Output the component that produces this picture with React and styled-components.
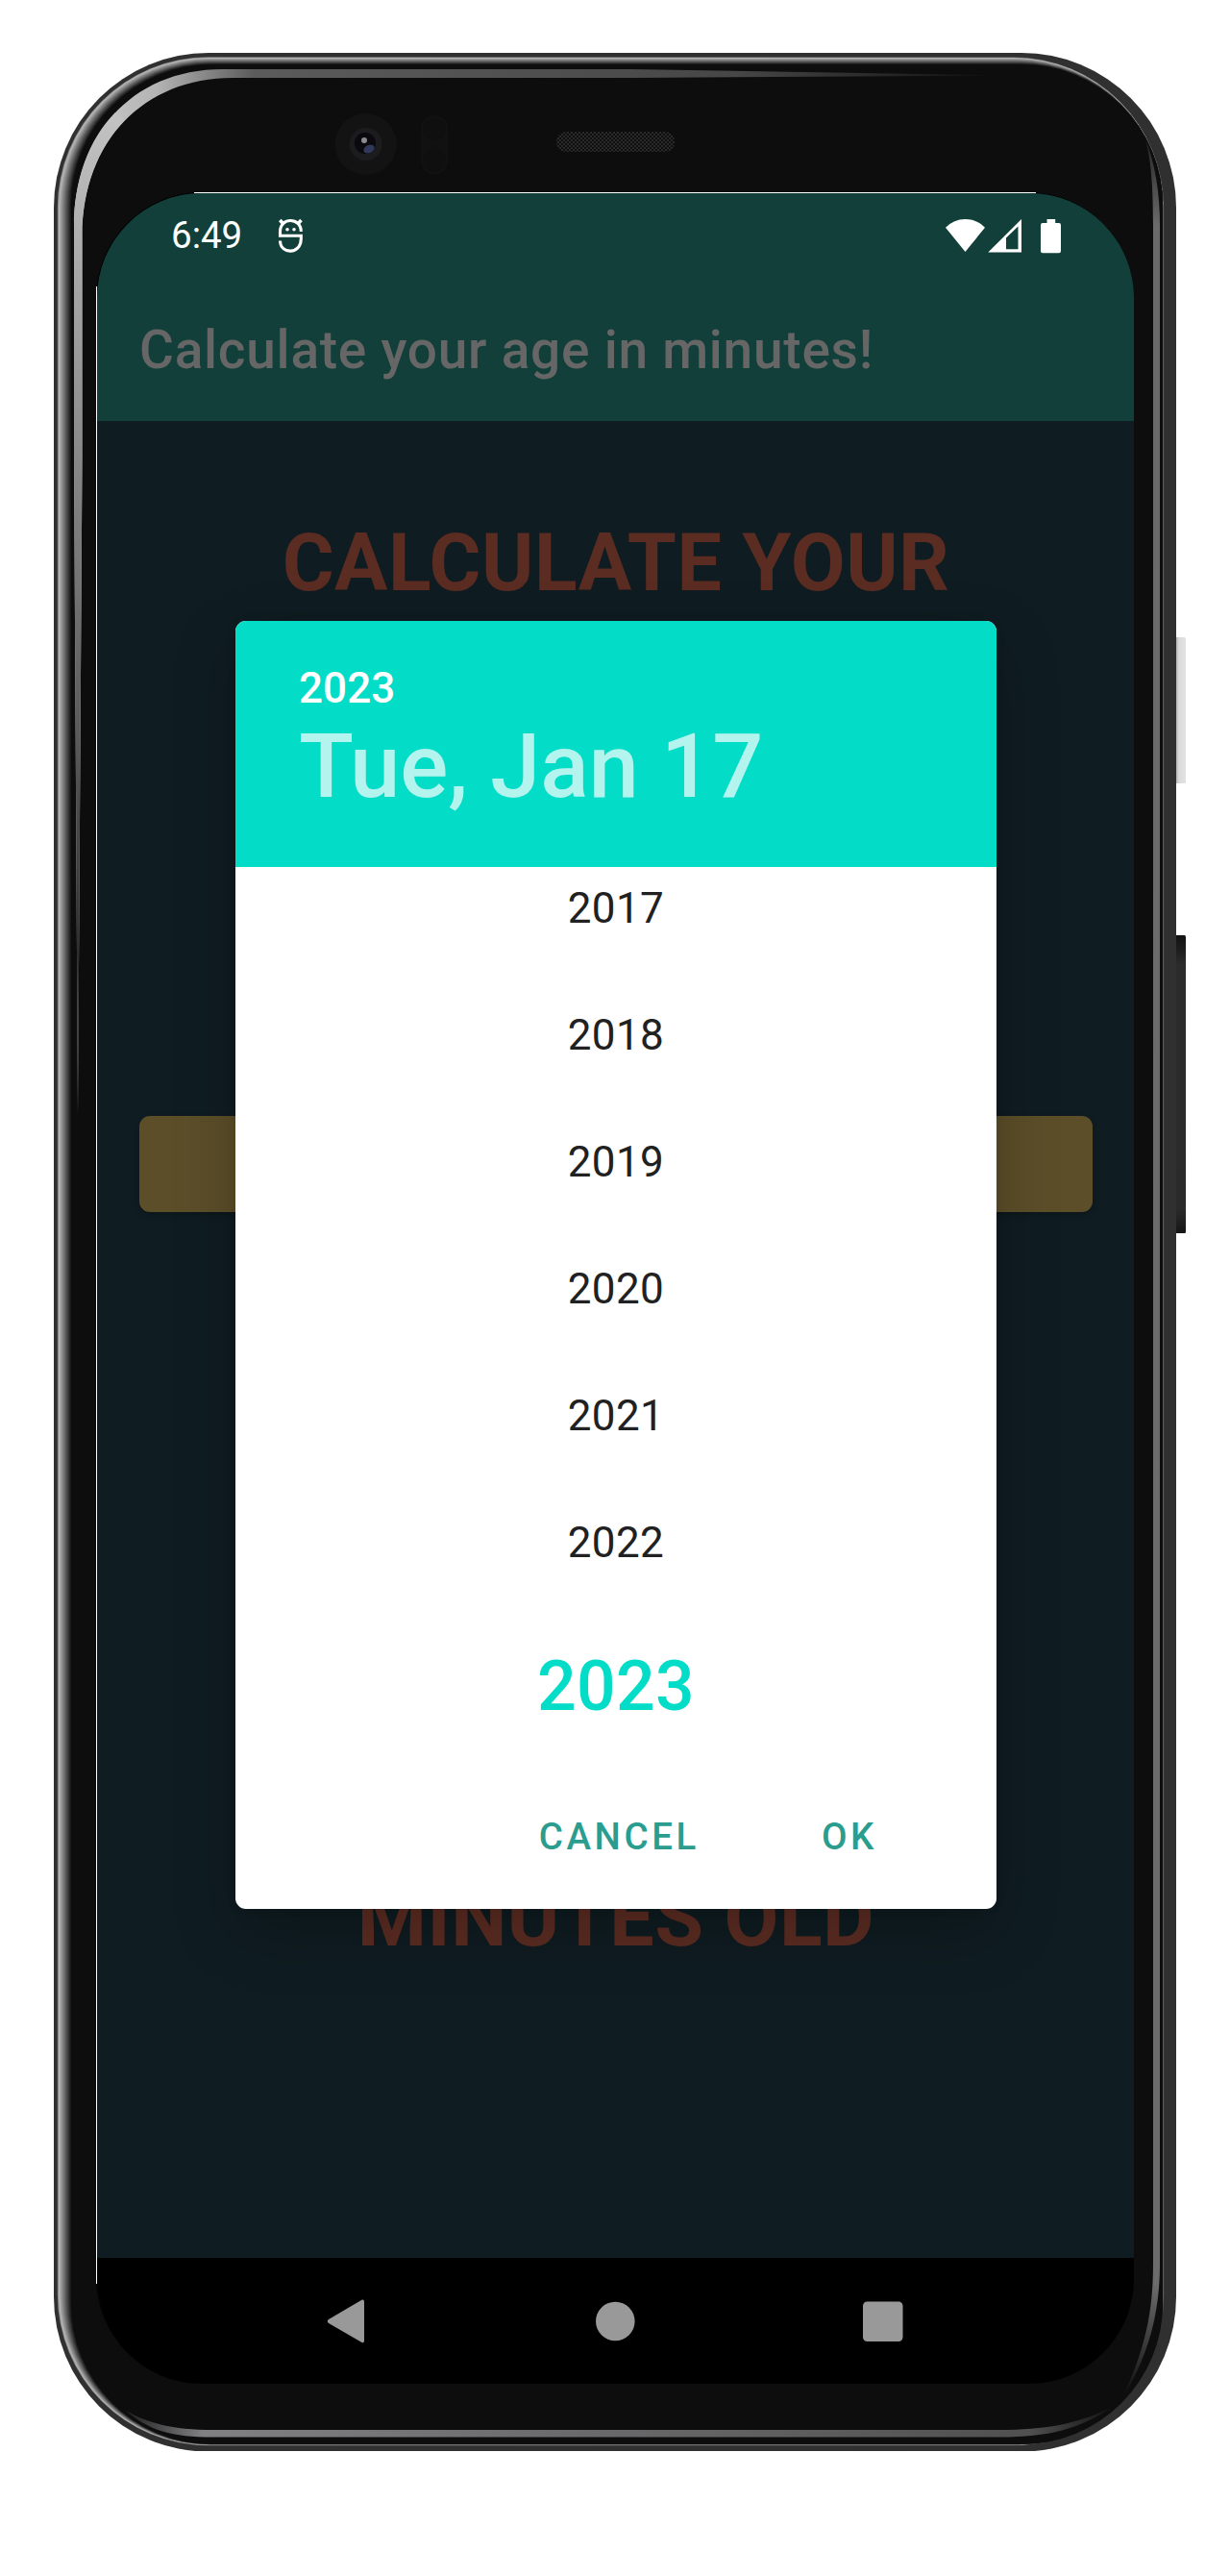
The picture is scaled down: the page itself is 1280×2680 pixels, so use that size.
import React from "react";
import styled, { createGlobalStyle } from "styled-components";

const GlobalStyle = createGlobalStyle`
  * { box-sizing: border-box; }
  body { margin: 0; background: #fff; font-family: Roboto, "Liberation Sans", sans-serif; }
`;

const Stage = styled.main`
  width: 1280px;
  height: 2680px;
  padding: 55px 0 0 56px;
  background: #fff;
  overflow: hidden;
`;

const Phone = styled.div`
  position: relative;
  width: 1178px;
  height: 2495px;
  padding: 146px 0 0 45px;
`;

const FrameArt = styled.svg`
  position: absolute;
  top: 0;
  left: 0;
  display: block;
`;

const Screen = styled.div`
  position: relative;
  display: flex;
  flex-direction: column;
  width: 1079px;
  height: 2279px;
  border-radius: 109px;
  overflow: hidden;
  background: #0f1c21;
`;

const TopBar = styled.header`
  height: 237px;
  background: #123f39;
`;

const StatusBar = styled.div`
  display: flex;
  align-items: center;
  justify-content: space-between;
  height: 87px;
  padding: 0 75px 0 77px;
  color: #fff;
`;

const StatusGroup = styled.div`
  display: flex;
  align-items: center;
`;

const Clock = styled.span`
  width: 110px;
  font-size: 38.5px;
  line-height: 46px;
`;

const AppTitle = styled.h1`
  margin: 44px 0 0 44px;
  font-size: 55px;
  font-weight: 500;
  line-height: 64px;
  letter-spacing: 0.75px;
  color: #666;
  white-space: nowrap;
`;

const Body = styled.section`
  display: flex;
  flex-direction: column;
  align-items: center;
  flex: 1;
  padding: 100px 43px 0 44px;
`;

const Headline = styled.h2`
  margin: 0;
  font-size: 82.5px;
  font-weight: 700;
  line-height: 96px;
  letter-spacing: 0.5px;
  color: #5b2c22;
  white-space: nowrap;
`;

const DateButton = styled.button`
  width: 100%;
  height: 100px;
  margin: 527px 0 687px;
  border: 0;
  border-radius: 11px;
  background: #5c4e29;
  box-shadow: 0 3px 6px rgba(0, 0, 0, 0.2);
`;

const NavBar = styled.nav`
  display: flex;
  align-items: center;
  justify-content: space-between;
  height: 131px;
  padding: 0 240px 0 239px;
  background: #000;
`;

const Dialog = styled.div`
  position: absolute;
  top: 445px;
  left: 144px;
  display: flex;
  flex-direction: column;
  width: 792px;
  height: 1340px;
  border-radius: 11px;
  overflow: hidden;
  background: #fff;
  box-shadow: 0 24px 66px rgba(0, 0, 0, 0.22), 0 0 12px rgba(0, 0, 0, 0.06);
`;

const DialogHeader = styled.div`
  height: 256px;
  padding: 44px 66px 0;
  background: #03dcc7;
`;

const HeaderYear = styled.div`
  font-size: 44px;
  font-weight: 500;
  line-height: 52px;
  letter-spacing: 0.1px;
  color: #fff;
`;

const HeaderDate = styled.div`
  font-size: 93.5px;
  font-weight: 500;
  line-height: 110px;
  color: #b4f4ee;
  white-space: nowrap;
`;

const YearViewport = styled.div`
  height: 936px;
  overflow: hidden;
`;

const YearList = styled.ul`
  margin: -23px 0 0;
  padding: 0;
  list-style: none;
  text-align: center;
`;

const Year = styled.li`
  font-size: ${(p) => (p.$selected ? "71.5px" : "44px")};
  font-weight: ${(p) => (p.$selected ? 500 : 400)};
  line-height: ${(p) => (p.$selected ? "167px" : "132px")};
  letter-spacing: 0.4px;
  color: ${(p) => (p.$selected ? "#03dcc7" : "#212121")};
`;

const Actions = styled.div`
  display: flex;
  align-items: center;
  justify-content: flex-end;
  gap: 127px;
  height: 146px;
  padding-right: 124px;
`;

const TextButton = styled.button`
  padding: 0;
  border: 0;
  background: none;
  font: 500 38.5px/46px Roboto, "Liberation Sans", sans-serif;
  letter-spacing: 3.6px;
  color: #2a9d8f;
`;

const mix = (t) => {
  const c = Math.round(184 + (13 - 184) * t);
  return `rgb(${c},${c},${c})`;
};

const RIM_STEPS = Array.from({ length: 15 }, (_, i) => {
  const t = i / 14;
  return {
    x: 61 + 13 * t - 56,
    y: 60 + 7 * t - 55,
    right: 1210.4 - 56 - 0.4 * t,
    bottom: 2543.6 - 55 - 0.8 * t,
    fill: mix(t),
  };
});

function DeviceFrame() {
  return (
    <FrameArt width="1178" height="2495" viewBox="0 0 1178 2495" aria-hidden="true">
      <defs>
        <linearGradient id="edge" x1="0" y1="0" x2="1" y2="0">
          <stop offset="0" stopColor="#898989" />
          <stop offset="0.55" stopColor="#6f6f6f" />
          <stop offset="1" stopColor="#555" />
        </linearGradient>
        <linearGradient id="shineTop" gradientUnits="userSpaceOnUse" x1="60" y1="0" x2="990" y2="0">
          <stop offset="0" stopColor="#c2c2c2" />
          <stop offset="0.05" stopColor="#b4b4b4" />
          <stop offset="0.16" stopColor="#5b5b5b" />
          <stop offset="0.7" stopColor="#474747" />
          <stop offset="1" stopColor="#0d0d0e" />
        </linearGradient>
        <linearGradient id="shineLeft" gradientUnits="userSpaceOnUse" x1="0" y1="70" x2="0" y2="1100">
          <stop offset="0" stopColor="#c2c2c2" />
          <stop offset="0.33" stopColor="#8a8a8a" />
          <stop offset="0.65" stopColor="#555" />
          <stop offset="1" stopColor="#0d0d0e" />
        </linearGradient>
        <linearGradient id="shineRight" gradientUnits="userSpaceOnUse" x1="0" y1="60" x2="0" y2="2440">
          <stop offset="0" stopColor="#0d0d0e" />
          <stop offset="0.05" stopColor="#6a6a6a" />
          <stop offset="0.95" stopColor="#6c6c6d" />
          <stop offset="1" stopColor="#0d0d0e" />
        </linearGradient>
        <linearGradient id="shineBottom" gradientUnits="userSpaceOnUse" x1="60" y1="0" x2="1110" y2="0">
          <stop offset="0" stopColor="#0d0d0e" />
          <stop offset="0.09" stopColor="#808083" />
          <stop offset="0.91" stopColor="#505050" />
          <stop offset="1" stopColor="#0d0d0e" />
        </linearGradient>
        <linearGradient id="power" x1="0" y1="0" x2="1" y2="0">
          <stop offset="0" stopColor="#999" />
          <stop offset="0.4" stopColor="#dadada" />
          <stop offset="1" stopColor="#e2e2e2" />
        </linearGradient>
        <linearGradient id="volume" x1="0" y1="0" x2="0" y2="1">
          <stop offset="0" stopColor="#121212" />
          <stop offset="0.1" stopColor="#2b2b2b" />
          <stop offset="0.92" stopColor="#2a2a2a" />
          <stop offset="1" stopColor="#161616" />
        </linearGradient>
        <pattern id="mesh" width="4" height="4" patternUnits="userSpaceOnUse">
          <rect width="4" height="4" fill="#0e0e0e" />
          <rect width="2" height="2" fill="#2a2a2a" />
          <rect x="2" y="2" width="2" height="2" fill="#2a2a2a" />
        </pattern>
      </defs>

      <rect x="1166" y="608" width="12" height="152" rx="1.5" fill="url(#power)" />
      <rect x="1166" y="918" width="12" height="310" rx="1.5" fill="url(#volume)" />

      <rect width="1168" height="2495.6" rx="161" fill="#303030" />
      <rect x="3.8" y="4.2" width="1151.4" height="2485" rx="157" fill="url(#edge)" />
      {RIM_STEPS.map((s) => (
        <rect key={s.x} x={s.x} y={s.y} width={s.right - s.x} height={s.bottom - s.y} rx={155.5 - (s.x - 5) * 0.7} fill={s.fill} />
      ))}

      <path d="M25 1105 L21 420 V180 C21 90 78 17 176 17 L600 17 L990 23.5 L600 26 H186 C94 26 29.5 92 29.5 190 V420 Z" fill="url(#shineTop)" />
      <path d="M25 1105 L21 420 V180 C21 133 36 90 64 62 L74 70 C46 98 29.500 142 29.500 190 V420 Z" fill="url(#shineLeft)" />
      <path d="M1136 90 C1142 112 1144 140 1144 180 V2300 C1144 2350 1136 2388 1112 2440 C1140 2395 1151 2350 1151 2300 V180 C1151 145 1146 115 1136 90 Z" fill="url(#shineRight)" />
      <path d="M74 2452 C96 2466 124 2473 165 2473 H985 C1030 2473 1065 2467 1100 2450 C1068 2472 1035 2480.500 985 2480.500 H165 C124 2480.500 98 2474 74 2452 Z" fill="url(#shineBottom)" />

      <circle cx="324.700" cy="95" r="32" fill="#131313" />
      <circle cx="324.700" cy="95" r="17" fill="#1c1c1f" />
      <circle cx="324" cy="94" r="11" fill="#0a0a0e" />
      <ellipse cx="328" cy="100" rx="6" ry="4" fill="#30395a" transform="rotate(-25 328 100)" />
      <circle cx="323" cy="91" r="3" fill="#8b8b8f" />

      <rect x="382" y="65" width="28" height="62" rx="14" fill="#111" />
      <circle cx="396" cy="80" r="11.500" fill="#0f0f0f" />
      <circle cx="396" cy="112" r="11.500" fill="#0f0f0f" />

      <rect x="523" y="82" width="123" height="21" rx="9.500" fill="url(#mesh)" />

      <rect x="44" y="145" width="1080" height="2280" rx="110" fill="#000" />
      <path d="M146 145.500 H1022" stroke="#fff" />
      <path d="M44.500 243 V2321" stroke="#fff" />
    </FrameArt>
  );
}

const YEARS = [2017, 2018, 2019, 2020, 2021, 2022, 2023];

export default function App() {
  return (
    <Stage>
      <GlobalStyle />
      <Phone>
        <DeviceFrame />
        <Screen>
          <TopBar>
            <StatusBar>
              <StatusGroup>
                <Clock>6:49</Clock>
                <svg width="29" height="38" viewBox="0 0 29 38" fill="none" stroke="#fff" strokeWidth="3.1">
                  <path d="M25.300 15 C25.300 -0.300 3.500 -0.300 3.500 14.800 V19.200 H25.300 V22.500 C25.300 39 3.500 39 3.500 24.500" />
                  <path d="M3.300 3 L7.500 7.500 M25.500 3 L21.300 7.500" strokeWidth="3.600" />
                  <circle cx="11" cy="12.800" r="1.800" fill="#fff" stroke="none" />
                  <circle cx="18" cy="12.800" r="1.800" fill="#fff" stroke="none" />
                </svg>
              </StatusGroup>
              <svg width="122" height="38" viewBox="0 0 122 38" fill="#fff">
                <path d="M1 10.800 Q9.500 2 21.500 2 Q33.500 2 42 10.800 L21.500 36 Z" />
                <path fillRule="evenodd" d="M45.300 36.500 L80 36.500 V2 Z M64 21.500 L76.500 9.500 V33.200 H64 Z" />
                <path d="M106.500 2 H115.200 V6 H119 Q121 6 121 8 V35.300 Q121 37.300 119 37.300 H102 Q100 37.300 100 35.300 V8 Q100 6 102 6 H106.500 Z" />
              </svg>
            </StatusBar>
            <AppTitle>Calculate your age in minutes!</AppTitle>
          </TopBar>

          <Body>
            <Headline>CALCULATE YOUR</Headline>
            <DateButton aria-label="Select date" />
            <Headline>MINUTES OLD</Headline>
          </Body>

          <NavBar>
            <svg width="42" height="48" viewBox="0 0 42 48" fill="#999">
              <path d="M36.500 1.800 Q39 0.800 39 4 V44 Q39 47.200 36.500 46 L2 26 Q-0.500 24 2 22 Z" />
            </svg>
            <svg width="42" height="42" viewBox="0 0 42 42" fill="#999">
              <circle cx="21.300" cy="21" r="20.300" />
            </svg>
            <svg width="42" height="42" viewBox="0 0 42 42" fill="#999">
              <rect x="0" y="0.500" width="41.500" height="41.500" rx="4.500" />
            </svg>
          </NavBar>

          <Dialog role="dialog">
            <DialogHeader>
              <HeaderYear>2023</HeaderYear>
              <HeaderDate>Tue, Jan 17</HeaderDate>
            </DialogHeader>
            <YearViewport>
              <YearList>
                {YEARS.map((y) => (
                  <Year key={y} $selected={y === 2023}>{y}</Year>
                ))}
              </YearList>
            </YearViewport>
            <Actions>
              <TextButton>CANCEL</TextButton>
              <TextButton>OK</TextButton>
            </Actions>
          </Dialog>
        </Screen>
      </Phone>
    </Stage>
  );
}
